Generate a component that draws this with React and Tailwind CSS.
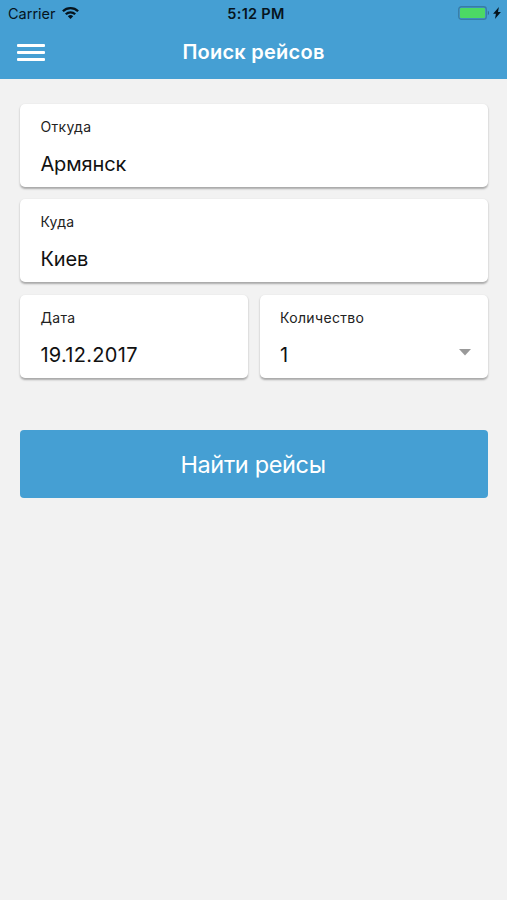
import React from 'react';

const WifiIcon = () => (
  <svg className="w-[17px] h-[12px] -mt-[1px]" viewBox="0 0 17 12" fill="none" stroke="#06141d" strokeWidth="2.3">
    <path d="M.9 4.3a10.8 10.8 0 0 1 15.2 0" />
    <path d="M3.8 7.3a6.7 6.7 0 0 1 9.4 0" />
    <path d="M8.5 12 5.8 9.3a3.8 3.8 0 0 1 5.4 0Z" fill="#06141d" stroke="none" />
  </svg>
);

const BatteryIcon = () => (
  <svg className="w-[32px] h-[14px]" viewBox="0 0 32 14">
    <rect x="0.75" y="0.75" width="27.5" height="12.5" rx="2.6" fill="none" stroke="#397ca4" strokeWidth="1.3" />
    <rect x="2" y="2" width="25" height="10" rx="1.2" fill="#4cd964" />
    <path d="M29.8 4.8c1.6.5 1.6 3.9 0 4.4Z" fill="#2f6d92" />
  </svg>
);

const BoltIcon = () => (
  <svg className="w-[8px] h-[12px]" viewBox="0 0 8 12" fill="#06141d">
    <path d="M5.9 0 .1 6.8h2.8L2 12l5.9-6.9H5Z" />
  </svg>
);

const StatusBar = () => (
  <div className="grid grid-cols-3 items-center h-[27px] pl-[8px] pr-[6px] text-[#06141d]">
    <div className="flex items-center gap-[6px]">
      <span className="text-[14.5px]">Carrier</span>
      <WifiIcon />
    </div>
    <div className="pl-[3px] text-center text-[14.5px] tracking-[0.3px] font-semibold">5:12 PM</div>
    <div className="flex items-center justify-end gap-[3px] pb-[1px]">
      <BatteryIcon />
      <BoltIcon />
    </div>
  </div>
);

const cardClasses = "flex flex-col h-[83px] pl-[20px] pt-[13px] bg-white rounded-[5px] shadow-[0_1.5px_2px_rgba(0,0,0,0.3)] text-left";

const Field = ({ label, value, dropdown, valueClass = 'tracking-[-0.1px]' }) => (
  <button type="button" className={cardClasses}>
    <span className="text-[14px] leading-[20px] tracking-[0.35px] text-[#222]">{label}</span>
    <span className={`flex items-center justify-between mt-[13px] pr-[17px] text-[20px] leading-[28px] text-[#111] ${valueClass}`}>
      {value}
      {dropdown && (
        <svg className="w-[12px] h-[7px] -mt-[4px]" viewBox="0 0 12 7" fill="#999">
          <path d="M0 0h12L6 6.5Z" />
        </svg>
      )}
    </span>
  </button>
);

const App = () => {
  return (
    <div className="min-h-screen bg-[#f2f2f2] font-['Inter',sans-serif]">
      <header className="h-[79px] bg-[#459fd3]">
        <StatusBar />
        <div className="grid grid-cols-[60px_1fr_60px] items-center h-[51px]">
          <button type="button" aria-label="Menu" className="flex flex-col gap-[4px] ml-[17px] w-[28px]">
            <span className="h-[3px] bg-white rounded-[1px]"></span>
            <span className="h-[3px] bg-white rounded-[1px]"></span>
            <span className="h-[3px] bg-white rounded-[1px]"></span>
          </button>
          <h1 className="pb-[2px] text-center text-[20px] tracking-[0.25px] font-semibold text-white">Поиск рейсов</h1>
        </div>
      </header>

      <main className="pl-[20.4px] pr-[19.4px] pt-[25px]">
        <div className="grid grid-cols-2 gap-x-[12px] gap-y-[12.4px]">
          <div className="col-span-2 grid"><Field label="Откуда" value="Армянск" /></div>
          <div className="col-span-2 grid"><Field label="Куда" value="Киев" /></div>
          <Field label="Дата" value="19.12.2017" valueClass="tracking-[0.3px]" />
          <Field label="Количество" value="1" dropdown />
        </div>

        <button type="button" className="w-full h-[68px] mt-[52.2px] pr-[2px] pt-[1px] rounded-[4px] bg-[#459fd3] text-white text-[23.5px] tracking-[-0.35px]">
          Найти рейсы
        </button>
      </main>
    </div>
  );
};

export default App;
